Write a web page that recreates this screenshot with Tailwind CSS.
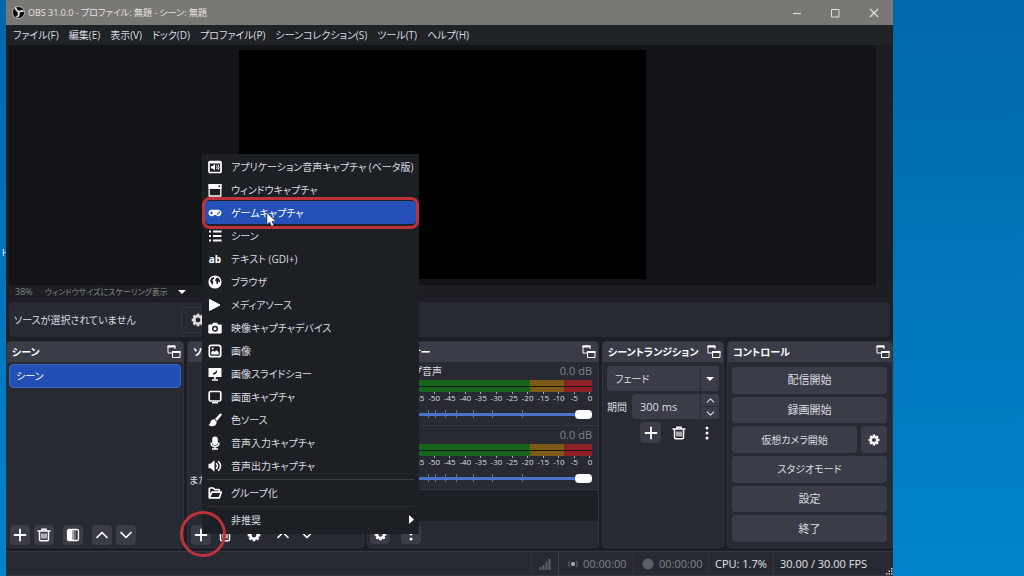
<!DOCTYPE html>
<html lang="ja">
<head>
<meta charset="utf-8">
<title>OBS 31.0.0</title>
<script src="https://cdn.jsdelivr.net/npm/@tailwindcss/browser@4"></script>
</head>
<body class="font-['Open_Sans','Noto_Sans_CJK_JP',sans-serif] [font-feature-settings:'palt'] text-[10px] leading-4 text-[#dcdde0] bg-[#0078c0]">
<svg class="hidden" aria-hidden="true">
  <symbol id="popout" viewBox="0 0 14 14"><path d="M8 4V1H1v7h4" fill="none" stroke="currentColor" stroke-width="1"/><path d="M.5 .5h8v2h-8zM5 6h8.500v2H5z" fill="currentColor"/><path d="M5.500 6.500h7.500v6H5.500z" fill="none" stroke="currentColor"/></symbol>
  <symbol id="plus" viewBox="0 0 14 14"><path d="M7 1.500v11M1.500 7h11" fill="none" stroke="currentColor" stroke-width="1.800" stroke-linecap="round"/></symbol>
  <symbol id="trash" viewBox="0 0 14 14"><path d="M1 3h12M5 2.500V1.200h4v1.300M2.500 3v8.500q0 1.300 1.300 1.300h6.400q1.300 0 1.300-1.300V3" fill="none" stroke="currentColor" stroke-width="1.500" stroke-linecap="round"/><path d="M5 5.500v5M7 5.500v5M9 5.500v5" stroke="currentColor" stroke-width="1.200"/></symbol>
  <symbol id="filter" viewBox="0 0 14 14"><rect x="1.500" y="1.500" width="11" height="11" rx="1.500" fill="none" stroke="currentColor" stroke-width="1.300"/><path d="M2 2h4v10H2z" fill="currentColor"/><path d="M6 2h2v10H6z" fill="currentColor" opacity=".55"/><path d="M8 2h2v10H8z" fill="currentColor" opacity=".25"/></symbol>
  <symbol id="up" viewBox="0 0 14 14"><path d="M2 9.500l5-5 5 5" fill="none" stroke="currentColor" stroke-width="1.700" stroke-linecap="round" stroke-linejoin="round"/></symbol>
  <symbol id="down" viewBox="0 0 14 14"><path d="M2 4.500l5 5 5-5" fill="none" stroke="currentColor" stroke-width="1.700" stroke-linecap="round" stroke-linejoin="round"/></symbol>
  <symbol id="dots" viewBox="0 0 14 14"><g fill="currentColor"><circle cx="7" cy="2" r="1.500"/><circle cx="7" cy="7" r="1.500"/><circle cx="7" cy="12" r="1.500"/></g></symbol>
  <symbol id="gear" viewBox="0 0 14 14"><circle cx="7" cy="7" r="3.700" fill="none" stroke="currentColor" stroke-width="2.600"/><path d="M7 .7v2M7 11.300v2M.7 7h2M11.300 7h2M2.550 2.550l1.400 1.400M10.050 10.050l1.400 1.400M2.550 11.450l1.400-1.400M10.050 3.950l1.400-1.400" stroke="currentColor" stroke-width="2.800"/></symbol>
  <symbol id="i-app" viewBox="0 0 14 14"><rect x="1" y="1.500" width="12" height="11" rx="1" fill="none" stroke="currentColor" stroke-width="1.700"/><path d="M1 1.500h12v2H1zM3 6h1.500L7 4v6.500L4.500 8.500H3z" fill="currentColor"/><path d="M8.500 5.500q1.300 1.700 0 3.500M10 4.500q2 2.700 0 5.500" fill="none" stroke="currentColor"/></symbol>
  <symbol id="i-window" viewBox="0 0 14 14"><path d="M1.200 2h11.600v11H1.200z" fill="none" stroke="currentColor" stroke-width="1.300"/><path d="M.5 1h13v5H.5z" fill="currentColor"/><path d="M10.500 2.500h1.500v1.500h-1.500z" fill="#1c1f24"/></symbol>
  <symbol id="i-game" viewBox="0 0 14 14"><path d="M3.500 3.800h7a3.200 3.200 0 1 1-2.500 5.400Q7 8.400 6 9.200A3.200 3.200 0 1 1 3.500 3.800z" fill="currentColor"/><path d="M2 7h3M3.500 5.500v3" stroke="#2450b8" stroke-width="1.100"/><circle cx="9.700" cy="7.800" r=".9" fill="#2450b8"/><circle cx="11.300" cy="6.300" r=".9" fill="#2450b8"/></symbol>
  <symbol id="i-list" viewBox="0 0 14 14"><path d="M1 2.500h2M1 7h2M1 11.500h2M5 2.500h8.500M5 7h8.500M5 11.500h8.500" stroke="currentColor" stroke-width="1.900"/></symbol>
  <symbol id="i-globe" viewBox="0 0 14 14"><circle cx="7" cy="7" r="6.600" fill="currentColor"/><path d="M2 6l1.200-2.800L5.500 2l.8 1.300-1.800 2 .8 2-1 3L3.300 8zM8 3.300l1.800-.8L12 5l-.3 2.200-1.500-.4-.5 2.500-1.300-.7V6.500L7 5.500z" fill="#1c1f24"/></symbol>
  <symbol id="i-play" viewBox="0 0 14 14"><path d="M1.500 1.500L12 7 1.500 12.500z" fill="currentColor" stroke="currentColor" stroke-linejoin="round"/></symbol>
  <symbol id="i-camera" viewBox="0 0 14 14"><path d="M1 3.500h3L5 1.800h4l1 1.700h3q.7 0 .7.700v7.600q0 .7-.7.700H1q-.7 0-.7-.7V4.200q0-.7.700-.7z" fill="currentColor"/><circle cx="7" cy="7.700" r="2.300" fill="none" stroke="#1c1f24" stroke-width="1.500"/></symbol>
  <symbol id="i-image" viewBox="0 0 14 14"><rect x="1.300" y="1.300" width="11.400" height="11.400" rx="2" fill="none" stroke="currentColor" stroke-width="1.700"/><path d="M3.300 10.500V8l1.700-1.200 1.500 1 2-1.500 2.200 2v2.200z" fill="currentColor"/><circle cx="4.700" cy="4.500" r="1" fill="currentColor"/></symbol>
  <symbol id="i-slides" viewBox="0 0 14 14"><path d="M.5 1h13v9h-13z" fill="currentColor"/><path d="M7 9v3M4 13h6" fill="none" stroke="currentColor" stroke-width="1.600"/><path d="M5 7.500V6l1.500-.3L9 3v2.200L7 7.500z" fill="#1c1f24"/></symbol>
  <symbol id="i-display" viewBox="0 0 14 14"><rect x="1.200" y="1.500" width="11.600" height="9.500" rx="1.500" fill="none" stroke="currentColor" stroke-width="1.700"/><path d="M4 12.700h6" stroke="currentColor" stroke-width="1.500"/></symbol>
  <symbol id="i-brush" viewBox="0 0 14 14"><path d="M13.300.7q.8.900 0 1.900L9 8 7 6 11.500.9q1-.9 1.800-.2zM6.200 6.200l2.500 2.500Q8.600 12.800 4.500 13.200 2 13.400.6 11.700q1.400-.3 1.700-2Q2.800 6.200 6.200 6.200z" fill="currentColor"/></symbol>
  <symbol id="i-mic" viewBox="0 0 14 14"><rect x="4.200" y=".5" width="5.600" height="8.800" rx="2.800" fill="currentColor"/><path d="M3 6.500Q3 10.500 7 10.500T11 6.500M7 10.500v2.300M4 13h6" fill="none" stroke="currentColor" stroke-width="1.400"/></symbol>
  <symbol id="i-speaker" viewBox="0 0 14 14"><path d="M.5 4.800h2L6.500 1.300v11.400L2.500 9.200h-2z" fill="currentColor"/><path d="M8.500 4.500q1.800 2.500 0 5M10.500 2.500q4 4.500 0 9" fill="none" stroke="currentColor" stroke-width="1.500" stroke-linecap="round"/></symbol>
  <symbol id="i-folder" viewBox="0 0 14 14"><path d="M1.300 11.500V3q0-1 1-1h2.900l1.600 1.600h3.700q1 0 1 1V6M1.300 11.800L3.800 6.200h9.500l-2 5.600z" fill="none" stroke="currentColor" stroke-width="1.700" stroke-linejoin="round"/></symbol>
</svg>

<div class="relative flex min-h-screen overflow-hidden bg-linear-to-b from-[#0068ab] to-[#0084cb]">
  <div class="w-1.5 shrink-0 overflow-hidden pt-[245px] pl-0.5 text-[9px] text-white">H</div>

  <main class="relative flex min-w-0 flex-1 flex-col bg-[#1b1e24]">
    <header class="flex h-[25px] items-center bg-[#7a7874] pl-1.5 text-[#e4e3e1]">
      <svg class="size-[13px]" viewBox="0 0 14 14"><circle cx="7" cy="7" r="6.500" fill="#0b0b0b" stroke="#d8d8d8" stroke-width=".8"/><path d="M4 2.300q.5 3 3 3.600M11.800 5.500Q9.300 4.700 7.600 6.900M5.500 11.700Q8.300 10 6.900 7.600" fill="none" stroke="#dcdcdc" stroke-width="1.900" stroke-linecap="round"/></svg>
      <h1 class="ml-[3px] flex-1 text-[9px]">OBS 31.0.0 - プロファイル: 無題 - シーン: 無題</h1>
      <button aria-label="最小化" class="flex w-[38px] justify-center"><svg class="size-3" viewBox="0 0 12 12"><path d="M2 6.500h8" stroke="currentColor"/></svg></button>
      <button aria-label="最大化" class="flex w-[38px] justify-center"><svg class="size-3" viewBox="0 0 12 12"><path d="M2.500 2.500h7.500v7.500H2.500z" fill="none" stroke="currentColor"/></svg></button>
      <button aria-label="閉じる" class="flex w-[39px] justify-center"><svg class="size-3" viewBox="0 0 12 12"><path d="M2 2l8 8M10 2l-8 8" stroke="currentColor" stroke-width="1.100"/></svg></button>
    </header>

    <nav class="flex h-5 items-center gap-2.5 bg-[#1f2227] pl-[7px]">
      <button>ファイル(F)</button><button>編集(E)</button><button>表示(V)</button><button>ドック(D)</button><button>プロファイル(P)</button><button>シーンコレクション(S)</button><button>ツール(T)</button><button>ヘルプ(H)</button>
    </nav>

    <section class="ml-[3px] mr-1 flex min-h-[240px] flex-1 bg-[#1c1e23]" aria-label="プレビュー">
      <div class="flex flex-1 justify-center bg-[#131418] pt-[5px] pb-1.5">
        <div class="aspect-video h-[229px] bg-black"></div>
      </div>
      <div class="w-[13px]"></div>
    </section>
    <div class="mx-[3px] flex h-[13px] items-center gap-3 bg-[#1c1e23] pl-1.5 text-[#858789]">
      <span class="text-[9px]">38%</span>
      <button class="flex items-center gap-2.5 text-[8px]">ウィンドウサイズにスケーリング表示<svg class="h-1 w-2 text-white" viewBox="0 0 8 4"><path d="M0 0h8L4 4z" fill="currentColor"/></svg></button>
    </div>

    <div class="mx-[3px] mt-1 flex h-[35px] items-center rounded-sm bg-[#272a33]">
      <span class="w-[172px] pl-[5px]">ソースが選択されていません</span>
      <button aria-label="プロパティ" class="flex h-[26px] w-20 items-center rounded-sm border border-[#343743] pl-[9px]"><svg class="size-[14px]"><use href="#gear"/></svg></button>
    </div>

    <div class="mt-1 grid h-[207px] grid-cols-[178fr_177fr_232fr_122fr_166fr] gap-[3px]">
      <section class="flex flex-col overflow-hidden rounded-sm border border-[#30333d] bg-[#272a33]">
        <header class="flex h-5 shrink-0 items-center justify-between bg-[#3a3d48] px-[5px] font-bold text-white"><h2>シーン</h2><button aria-label="シーンを切り離す" class="-mr-[3px]"><svg class="size-[14px]"><use href="#popout"/></svg></button></header>
        <div class="flex-1 px-0.5 pt-0.5"><button class="flex h-6 w-full items-center rounded-sm border border-[#3a63c4] bg-[#234eb6] pl-1.5 text-white">シーン</button></div>
        <div class="flex shrink-0 items-center gap-1 px-[3px] pb-0.5 text-white">
          <button aria-label="シーンを追加" class="grid size-5 place-items-center rounded-sm bg-[#3a3d48]"><svg class="size-[14px]"><use href="#plus"/></svg></button>
          <button aria-label="シーンを削除" class="grid size-5 place-items-center rounded-sm bg-[#3a3d48]"><svg class="size-[14px]"><use href="#trash"/></svg></button>
          <button aria-label="フィルタ" class="ml-[5px] grid size-5 place-items-center rounded-sm bg-[#3a3d48]"><svg class="size-[14px]"><use href="#filter"/></svg></button>
          <button aria-label="上へ" class="ml-[5px] grid size-5 place-items-center rounded-sm bg-[#3a3d48]"><svg class="size-[14px]"><use href="#up"/></svg></button>
          <button aria-label="下へ" class="grid size-5 place-items-center rounded-sm bg-[#3a3d48]"><svg class="size-[14px]"><use href="#down"/></svg></button>
        </div>
      </section>

      <section class="flex flex-col overflow-hidden rounded-sm border border-[#30333d] bg-[#272a33]">
        <header class="flex h-5 shrink-0 items-center bg-[#3a3d48] px-[5px] font-bold text-white"><h2>ソース</h2></header>
        <p class="flex flex-1 flex-col justify-end whitespace-nowrap pb-[37px] pl-px">または右クリックして追加してください。</p>
        <div class="flex shrink-0 items-center gap-1 px-[3px] pb-0.5 text-white">
          <button aria-label="ソースを追加" class="grid size-5 place-items-center rounded-sm bg-[#3a3d48]"><svg class="size-[14px]"><use href="#plus"/></svg></button>
          <button aria-label="ソースを削除" class="grid size-5 place-items-center"><svg class="size-[14px]"><use href="#trash"/></svg></button>
          <button aria-label="ソースのプロパティ" class="ml-[5px] grid size-5 place-items-center"><svg class="size-[14px]"><use href="#gear"/></svg></button>
          <button aria-label="ソースを上へ" class="ml-[5px] grid size-5 place-items-center"><svg class="size-[14px]"><use href="#up"/></svg></button>
          <button aria-label="ソースを下へ" class="grid size-5 place-items-center"><svg class="size-[14px]"><use href="#down"/></svg></button>
        </div>
      </section>

      <section class="flex flex-col overflow-hidden rounded-sm border border-[#30333d] bg-[#1c1f24]">
        <header class="flex h-5 shrink-0 items-center justify-between bg-[#3a3d48] px-[5px] font-bold text-white"><h2>音声ミキサー</h2><button aria-label="ミキサーを切り離す" class="-mr-[3px]"><svg class="size-[14px]"><use href="#popout"/></svg></button></header>
        <div id="mixer"></div>
        <div class="mt-auto flex h-[26px] shrink-0 items-center gap-[11px] bg-[#272a33] pl-0.5 text-white">
          <button aria-label="オーディオの詳細" class="grid size-5 place-items-center rounded-sm bg-[#3a3d48]"><svg class="size-[13px]"><use href="#gear"/></svg></button>
          <button aria-label="ミキサーメニュー" class="grid size-5 place-items-center rounded-sm bg-[#3a3d48]"><svg class="size-[14px]"><use href="#dots"/></svg></button>
        </div>
      </section>

      <section class="flex flex-col overflow-hidden rounded-sm border border-[#30333d] bg-[#272a33]">
        <header class="flex h-5 shrink-0 items-center justify-between bg-[#3a3d48] px-[5px] font-bold text-white"><h2>シーントランジション</h2><button aria-label="トランジションを切り離す" class="-mr-[3px]"><svg class="size-[14px]"><use href="#popout"/></svg></button></header>
        <div class="flex flex-col gap-[3px] p-1">
          <div class="relative">
            <select aria-label="トランジション" class="h-[25px] w-full appearance-none rounded-sm bg-[#3a3d48] pl-2"><option>フェード</option></select>
            <span class="pointer-events-none absolute inset-y-0 right-0 grid w-[19px] place-items-center border-l border-[#292c35]"><svg class="h-1 w-2 text-white" viewBox="0 0 8 4"><path d="M0 0h8L4 4z" fill="currentColor"/></svg></span>
          </div>
          <div class="flex items-center">
            <label for="dur" class="w-[25px] shrink-0 whitespace-nowrap">期間</label>
            <div class="flex h-[25px] min-w-0 flex-1 rounded-sm bg-[#3a3d48]">
              <input id="dur" value="300 ms" class="w-0 min-w-0 flex-1 bg-transparent pl-2 text-[11px]">
              <div class="flex w-[19px] flex-col divide-y divide-[#292c35] border-l border-[#292c35]">
                <button aria-label="増やす" class="grid flex-1 place-items-center"><svg class="size-[9px]" viewBox="0 0 14 14"><use href="#up"/></svg></button>
                <button aria-label="減らす" class="grid flex-1 place-items-center"><svg class="size-[9px]" viewBox="0 0 14 14"><use href="#down"/></svg></button>
              </div>
            </div>
          </div>
          <div class="flex justify-end gap-[7px] pr-0.5 text-white">
            <button aria-label="トランジションを追加" class="grid size-[21px] place-items-center rounded-sm bg-[#3a3d48]"><svg class="size-[14px]"><use href="#plus"/></svg></button>
            <button aria-label="トランジションを削除" class="grid size-[21px] place-items-center"><svg class="size-[14px]"><use href="#trash"/></svg></button>
            <button aria-label="トランジションメニュー" class="grid size-[21px] place-items-center"><svg class="size-[14px]"><use href="#dots"/></svg></button>
          </div>
        </div>
      </section>

      <section class="flex flex-col overflow-hidden rounded-sm border border-[#30333d] bg-[#272a33]">
        <header class="flex h-5 shrink-0 items-center justify-between bg-[#3a3d48] px-[5px] font-bold text-white"><h2>コントロール</h2><button aria-label="コントロールを切り離す" class="-mr-[3px]"><svg class="size-[14px]"><use href="#popout"/></svg></button></header>
        <div class="flex flex-1 flex-col gap-[3px] pt-[5px] pr-[5px] pb-[5px] pl-1 text-[11px]">
          <button class="flex-1 rounded-sm bg-[#3a3d48]">配信開始</button>
          <button class="flex-1 rounded-sm bg-[#3a3d48]">録画開始</button>
          <div class="flex flex-1 gap-1"><button class="flex-1 rounded-sm bg-[#3a3d48] text-[10px]">仮想カメラ開始</button><button aria-label="仮想カメラの設定" class="grid w-[26px] place-items-center rounded-sm bg-[#3a3d48] text-white"><svg class="size-3"><use href="#gear"/></svg></button></div>
          <button class="flex-1 rounded-sm bg-[#3a3d48] text-[10px]">スタジオモード</button>
          <button class="flex-1 rounded-sm bg-[#3a3d48]">設定</button>
          <button class="flex-1 rounded-sm bg-[#3a3d48]">終了</button>
        </div>
      </section>
    </div>

    <footer class="mt-[3px] flex h-[25px] items-stretch justify-end border-y border-[#343743] bg-[#272a33] text-[11px] text-[#7f828a]">
      <div class="flex w-[27px] items-center justify-center border-l border-[#31343e]"><svg class="size-3" viewBox="0 0 12 12"><path d="M1.500 12V9M4.500 12V7M7.500 12V4M10.500 12V1" stroke="#5d6068" stroke-width="2"/></svg></div>
      <div class="flex w-[75px] items-center gap-1 border-l border-[#3c3f49] pl-2"><svg class="size-3" viewBox="0 0 12 12"><circle cx="6" cy="6" r="2" fill="#b0b2b7"/><path d="M3 3q-2.500 3 0 6M9 3q2.500 3 0 6" fill="none" stroke="#51545d" stroke-width="1.500"/></svg>00:00:00</div>
      <div class="flex w-[75px] items-center gap-[5px] border-l border-[#31343e] pl-2"><svg class="size-3" viewBox="0 0 12 12"><circle cx="6" cy="6" r="5.500" fill="#5d6068"/></svg>00:00:00</div>
      <div class="flex w-[65px] items-center border-l border-[#31343e] pl-1.5 text-[#e2e3e6]">CPU: 1.7%</div>
      <div class="flex w-[112px] items-center border-l border-[#31343e] pl-1.5 text-[#e2e3e6]">30.00 / 30.00 FPS</div>
      <svg class="size-2 self-end" viewBox="0 0 8 8"><path d="M1 6h1.500v1.500H1zM3.500 6H5v1.500H3.500zM6 6h1.500v1.500H6zM3.500 3.500H5V5H3.500zM6 3.500h1.500V5H6zM6 1h1.500v1.500H6z" fill="#d0d1d4"/></svg>
    </footer>
  </main>

  <div class="w-[131px] shrink-0"></div>

  <!-- Source type menu, with its highlighted entry and the add button ringed -->
  <div role="menu" aria-label="ソースを追加" class="absolute left-[202px] top-[154px] flex h-[380px] w-[217px] flex-col bg-[#1c1f24] px-[5px] pt-px text-[#dcdde0]">
    <button role="menuitem" class="flex h-[23px] items-center gap-[9px] pl-px"><svg class="size-[14px] text-white"><use href="#i-app"/></svg>アプリケーション音声キャプチャ (ベータ版)</button>
    <button role="menuitem" class="flex h-[23px] items-center gap-[9px] pl-px"><svg class="size-[14px] text-white"><use href="#i-window"/></svg>ウィンドウキャプチャ</button>
    <button role="menuitem" class="-mx-0.5 flex h-[23px] items-center gap-[9px] rounded-sm bg-[#2450b8] pl-[3px] text-white"><svg class="size-[14px] text-white"><use href="#i-game"/></svg>ゲームキャプチャ</button>
    <button role="menuitem" class="flex h-[23px] items-center gap-[9px] pl-px"><svg class="size-[14px] text-white"><use href="#i-list"/></svg>シーン</button>
    <button role="menuitem" class="flex h-[23px] items-center gap-[9px] pl-px"><b class="w-[14px] text-center text-white" aria-hidden="true">ab</b>テキスト (GDI+)</button>
    <button role="menuitem" class="flex h-[23px] items-center gap-[9px] pl-px"><svg class="size-[14px] text-white"><use href="#i-globe"/></svg>ブラウザ</button>
    <button role="menuitem" class="flex h-[23px] items-center gap-[9px] pl-px"><svg class="size-[14px] text-white"><use href="#i-play"/></svg>メディアソース</button>
    <button role="menuitem" class="flex h-[23px] items-center gap-[9px] pl-px"><svg class="size-[14px] text-white"><use href="#i-camera"/></svg>映像キャプチャデバイス</button>
    <button role="menuitem" class="flex h-[23px] items-center gap-[9px] pl-px"><svg class="size-[14px] text-white"><use href="#i-image"/></svg>画像</button>
    <button role="menuitem" class="flex h-[23px] items-center gap-[9px] pl-px"><svg class="size-[14px] text-white"><use href="#i-slides"/></svg>画像スライドショー</button>
    <button role="menuitem" class="flex h-[23px] items-center gap-[9px] pl-px"><svg class="size-[14px] text-white"><use href="#i-display"/></svg>画面キャプチャ</button>
    <button role="menuitem" class="flex h-[23px] items-center gap-[9px] pl-px"><svg class="size-[14px] text-white"><use href="#i-brush"/></svg>色ソース</button>
    <button role="menuitem" class="flex h-[23px] items-center gap-[9px] pl-px"><svg class="size-[14px] text-white"><use href="#i-mic"/></svg>音声入力キャプチャ</button>
    <button role="menuitem" class="flex h-[23px] items-center gap-[9px] pl-px"><svg class="size-[14px] text-white"><use href="#i-speaker"/></svg>音声出力キャプチャ</button>
    <hr class="mt-0.5 mb-px border-[#3a3d45]">
    <button role="menuitem" class="flex h-[23px] items-center gap-[9px] pl-px"><svg class="size-[14px] text-white"><use href="#i-folder"/></svg>グループ化</button>
    <hr class="mt-0.5 mb-px border-[#2c2f37]">
    <button role="menuitem" class="flex h-[23px] items-center justify-between pl-6">非推奨<svg class="h-[9px] w-[5px] text-white" viewBox="0 0 5 9"><path d="M0 0l5 4.500L0 9z" fill="currentColor"/></svg></button>
  </div>
  <div class="pointer-events-none absolute left-[202px] top-[197px] h-8 w-[217px] rounded-lg border-3 border-[#c0323a]"></div>
  <div class="pointer-events-none absolute left-[180px] top-[511px] size-[46px] rounded-full border-3 border-[#c0323a]"></div>
  <svg class="pointer-events-none absolute left-[266px] top-[212px] h-[15px] w-[11px]" viewBox="0 0 11 15"><path d="M1 1v11.500l2.700-2.400 1.900 4.200 2.200-1-1.900-4h3.800z" fill="#fff" stroke="#222" stroke-width=".5"/></svg>
</div>

<script>
  const channels = [['デスクトップ音声', 'desktop'], ['マイク', 'mic']];
  const dB = [-60, -55, -50, -45, -40, -35, -30, -25, -20, -15, -10, -5, 0];
  const marks = [13, 17, 22, 28, 37, 47, 63];
  document.getElementById('mixer').innerHTML = channels.map(([name, id]) => `
    <div class="h-16 border-b border-[#343743] bg-[#272a33] pl-0.5 pr-1.5 pt-px">
      <div class="flex justify-between"><label for="${id}" class="whitespace-nowrap">${name}</label><span class="text-[11px] text-[#7f828a]">0.0 dB</span></div>
      <div class="ml-[33px]">
        <div class="mt-px flex h-3 flex-col justify-between bg-[#15171b]">
          <div class="flex h-[6px]"><i class="w-[67%] bg-[#17641d]"></i><i class="w-[18%] bg-[#7d5a16]"></i><i class="flex-1 bg-[#8c2026]"></i></div>
          <div class="flex h-[5px]"><i class="w-[67%] bg-[#17641d]"></i><i class="w-[18%] bg-[#7d5a16]"></i><i class="flex-1 bg-[#8c2026]"></i></div>
        </div>
        <div class="mr-0.5 flex h-4 justify-between">${dB.map(v => `<span class="flex w-0 flex-col items-center text-[8px] leading-[8px]"><i class="h-0.5 w-px shrink-0 bg-[#a9abb0]"></i>${v}</span>`).join('')}</div>
        <div class="relative h-3">
          ${marks.map(m => `<i class="absolute top-0.5 h-2 w-px bg-[#6a6e7a]" style="left:${m}%"></i>`).join('')}
          <input id="${id}" type="range" value="100" class="absolute inset-x-0 top-0 h-3 w-full appearance-none bg-transparent [&::-webkit-slider-runnable-track]:h-[3px] [&::-webkit-slider-runnable-track]:rounded-full [&::-webkit-slider-runnable-track]:bg-[#4a72cc] [&::-webkit-slider-thumb]:-mt-[3px] [&::-webkit-slider-thumb]:h-[9px] [&::-webkit-slider-thumb]:w-[17px] [&::-webkit-slider-thumb]:appearance-none [&::-webkit-slider-thumb]:rounded-sm [&::-webkit-slider-thumb]:bg-white">
        </div>
      </div>
    </div>`).join('');
</script>
</body>
</html>
